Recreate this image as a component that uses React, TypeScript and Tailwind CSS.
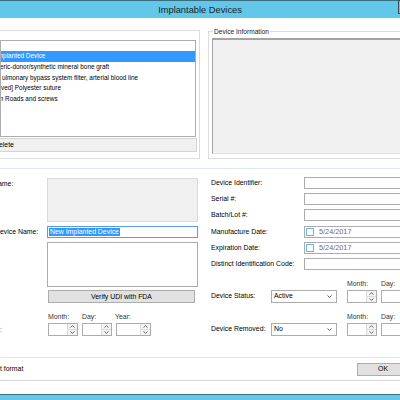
import React from 'react';

function Arrow({ up }: { up?: boolean }) {
  return (
    <svg width="5" height="3" viewBox="0 0 5 3" className="block">
      <path
        d={up ? 'M0.6 2.6 L2.5 0.6 L4.4 2.6' : 'M0.6 0.4 L2.5 2.4 L4.4 0.4'}
        fill="none"
        stroke="#4a4a4a"
        strokeWidth="0.8"
      />
    </svg>
  );
}

function Spinner({ className }: { className: string }) {
  return (
    <div className={`flex h-[13px] shrink-0 border border-[#acacac] bg-white ${className}`}>
      <div className="flex-1" />
      <div className="flex w-[10px] flex-col border-l border-[#dcdcdc] bg-[#f3f3f3]">
        <div className="flex flex-1 items-center justify-center border-b border-[#dcdcdc]">
          <Arrow up />
        </div>
        <div className="flex flex-1 items-center justify-center">
          <Arrow />
        </div>
      </div>
    </div>
  );
}

function Combo({ value }: { value: string }) {
  return (
    <div className="flex h-[13px] w-[66px] shrink-0 items-center justify-between border border-[#acacac] bg-white pl-[2px] pr-[4px]">
      <span>{value}</span>
      <svg width="5" height="3" viewBox="0 0 5 3" className="block">
        <path d="M0.5 0.4 L2.5 2.5 L4.5 0.4" fill="none" stroke="#3c3c3c" strokeWidth="0.8" />
      </svg>
    </div>
  );
}

function TextRow({ label }: { label: string }) {
  return (
    <div className="flex h-[12px] items-center">
      <span className="w-[93px] shrink-0 whitespace-nowrap">{label}</span>
      <div className="h-[12px] w-[120px] shrink-0 border border-[#acacac] bg-white" />
    </div>
  );
}

function DateRow({ label }: { label: string }) {
  return (
    <div className="flex h-[12px] items-center">
      <span className="w-[93px] shrink-0 whitespace-nowrap">{label}</span>
      <div className="flex h-[12px] w-[120px] shrink-0 items-center border border-[#acacac] bg-white pl-[1px]">
        <div className="h-[8px] w-[8px] border border-[#70b4e2] bg-white" />
        <span className="ml-[5px] text-[7.3px] text-[#6d6d6d]">5/24/2017</span>
      </div>
    </div>
  );
}

const items = [
  { text: 'Implanted Device', cls: '-ml-[5px]', selected: true },
  { text: 'eric-donor/synthetic mineral bone graft', cls: '-ml-[1px]' },
  { text: 'ulmonary bypass system filter, arterial blood line', cls: 'ml-[1px]' },
  { text: 'ved] Polyester suture', cls: 'ml-0' },
  { text: 'm Roads and screws', cls: '-ml-[3px]' },
];

export default function App() {
  return (
    <div className="flex h-[400px] w-[400px] flex-col overflow-hidden bg-white font-['Liberation_Sans',Arial,sans-serif] text-[6.9px] leading-[8px] text-black">
      {/* title bar */}
      <div className="relative flex h-[18px] shrink-0 items-center justify-center border-t border-[#3b6d80] bg-[#62c7e9]">
        <span className="text-[9.3px] leading-[10px] text-[#1e1e1e]">Implantable Devices</span>
        <div className="absolute right-[-40px] top-[-1px] h-[14px] w-[42px] border border-[#33515c]" />
      </div>

      {/* device list + information */}
      <div className="flex shrink-0 items-start">
        <div className="mt-[12px] h-[129px] w-[200px] shrink-0 border-y border-r border-[#dcdcdc] pt-[9px]">
          <div className="h-[97px] w-[196px] overflow-hidden border border-[#abadb3] bg-white pt-[10px] text-[6.4px]">
            {items.map((it) => (
              <div
                key={it.text}
                className={`h-[10.75px] overflow-hidden whitespace-nowrap leading-[10.75px] ${it.selected ? 'bg-[#3399ff] text-white' : ''}`}
              >
                <span className={`block ${it.cls}`}>{it.text}</span>
              </div>
            ))}
          </div>
          <div className="mt-[1px] flex h-[14px] w-[197px] items-center border-y border-r border-[#d5d5d5] bg-[#f0f0f0]">
            <span className="-ml-[1px]">elete</span>
          </div>
        </div>

        <div className="relative ml-[8px] mt-[13px] h-[128px] w-[200px] shrink-0 border-y border-l border-[#dcdcdc] pl-[3px] pt-[6px]">
          <span className="absolute left-[4px] top-[-4px] bg-white px-[1px] text-[6.6px] text-[#222]">
            Device Information
          </span>
          <div className="h-[116px] w-[200px] border-l border-t-2 border-b border-[#a3a3a3] border-b-[#e3e3e3] bg-[#f1f1f1]" />
        </div>
      </div>

      <div className="mt-[9px] h-px shrink-0 bg-[#e2e9ee]" />

      {/* form */}
      <div className="flex shrink-0">
        <div className="flex w-[200px] shrink-0 flex-col">
          <div className="mt-[9px] flex">
            <span className="-ml-[2px] w-[49px] shrink-0 pt-[2px]">ame:</span>
            <div className="h-[44px] w-[151px] border border-[#d9d9d9] bg-[#f0f0f0]" />
          </div>
          <div className="mt-[4px] flex h-[12px] items-center">
            <span className="w-[47px] shrink-0 whitespace-nowrap">evice Name:</span>
            <div className="flex h-[12px] w-[151px] items-center border border-[#569de5] bg-white pl-[1px]">
              <span className="bg-[#3399ff] px-[1px] text-white">New Implanted Device</span>
            </div>
          </div>
          <div className="ml-[47px] mt-[4px] h-[45px] w-[151px] border border-[#acacac] bg-white" />
          <div className="ml-[48px] mt-[3px] flex h-[13px] w-[147px] items-center justify-center border border-[#adadad] bg-[#e1e1e1]">
            Verify UDI with FDA
          </div>
          <div className="ml-[48px] mt-[10px] flex text-[#333]">
            <span className="w-[34px]">Month:</span>
            <span className="w-[33px]">Day:</span>
            <span>Year:</span>
          </div>
          <div className="mt-[2px] flex items-center">
            <span className="w-[48px] shrink-0 text-[#6b3f8f]">:</span>
            <Spinner className="w-[30px]" />
            <Spinner className="ml-[4px] w-[30px]" />
            <Spinner className="ml-[4px] w-[35px]" />
          </div>
        </div>

        <div className="flex flex-1 flex-col pl-[11px]">
          <div className="mt-[8px] flex flex-col gap-[4.2px]">
            <TextRow label="Device Identifier:" />
            <TextRow label="Serial #:" />
            <TextRow label="Batch/Lot #:" />
            <DateRow label="Manufacture Date:" />
            <DateRow label="Expiration Date:" />
            <TextRow label="Distinct Identification Code:" />
          </div>
          <div className="ml-[136px] mt-[10px] flex text-[#333]">
            <span className="w-[34px]">Month:</span>
            <span>Day:</span>
          </div>
          <div className="mt-[2px] flex h-[13px] items-center">
            <span className="w-[60px] shrink-0 whitespace-nowrap">Device Status:</span>
            <Combo value="Active" />
            <Spinner className="ml-[10px] w-[30px]" />
            <Spinner className="ml-[4px] w-[30px]" />
          </div>
          <div className="ml-[136px] mt-[10px] flex text-[#333]">
            <span className="w-[34px]">Month:</span>
            <span>Day:</span>
          </div>
          <div className="mt-[2px] flex h-[13px] items-center">
            <span className="w-[60px] shrink-0 whitespace-nowrap">Device Removed:</span>
            <Combo value="No" />
            <Spinner className="ml-[10px] w-[30px]" />
            <Spinner className="ml-[4px] w-[30px]" />
          </div>
        </div>
      </div>

      <div className="mt-[21px] h-px shrink-0 bg-[#e3e3e3]" />

      {/* footer */}
      <div className="flex h-[23px] shrink-0 items-center border-b border-[#d6d6d6]">
        <span className="w-[357px] shrink-0">t format</span>
        <div className="flex h-[13px] w-[52px] shrink-0 items-center justify-center border border-[#adadad] bg-[#e1e1e1]">
          OK
        </div>
      </div>
      <div className="h-[13px] shrink-0" />
      <div className="h-[6px] shrink-0 border-t border-[#3b6d80] bg-[#62c7e9]" />
    </div>
  );
}
